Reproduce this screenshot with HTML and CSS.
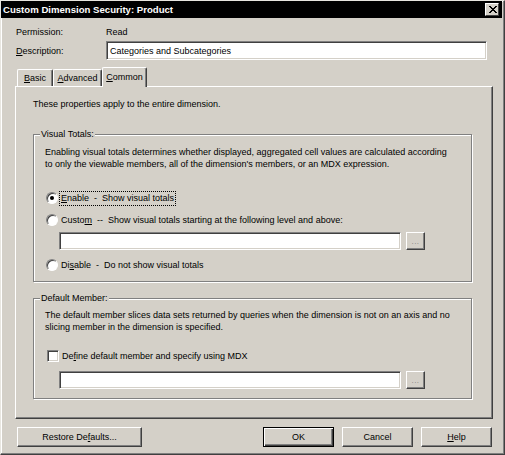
FILE: index.html
```html
<!DOCTYPE html>
<html>
<head>
<meta charset="utf-8">
<link rel="stylesheet" href="styles.css">
</head>
<body>
<div class="window">
  <div class="titlebar">
    <span class="title">Custom Dimension Security: Product</span>
    <span class="close">
      <svg width="9" height="8" viewBox="0 0 9 8"><path d="M1 0 L8 7 M2 0 L9 7 M8 0 L1 7 M9 0 L2 7" stroke="#000" stroke-width="1"/></svg>
    </span>
  </div>
  <div class="main">
    <div class="row perm">
      <span class="label">Permission:</span>
      <span>Read</span>
    </div>
    <div class="row desc">
      <span class="label"><u>D</u>escription:</span>
      <div class="input wide"><span class="val">Categories and Subcategories</span></div>
    </div>
    <div class="tabs">
      <div class="tab t-basic"><u>B</u>asic</div>
      <div class="tab t-adv"><u>A</u>dvanced</div>
      <div class="tab active t-common"><u>C</u>ommon</div>
    </div>
    <div class="panel">
      <p class="intro">These properties apply to the entire dimension.</p>
      <div class="group g1">
        <span class="gtitle">Visual Totals:</span>
        <p class="gtext">Enabling visual totals determines whether displayed, aggregated cell values are calculated according<br>to only the viewable members, all of the dimension's members, or an MDX expression.</p>
        <div class="opt o-enable">
          <span class="radio checked"></span>
          <span class="focus"><u>E</u>nable&nbsp; -&nbsp; Show visual totals</span>
        </div>
        <div class="opt o-custom">
          <span class="radio"></span>
          <span class="olabel">Custo<u>m</u>&nbsp; --&nbsp; Show visual totals starting at the following level and above:</span>
        </div>
        <div class="field">
          <div class="input box"></div>
          <div class="dots">...</div>
        </div>
        <div class="opt o-disable">
          <span class="radio"></span>
          <span class="olabel">Di<u>s</u>able&nbsp; -&nbsp; Do not show visual totals</span>
        </div>
      </div>
      <div class="group g2">
        <span class="gtitle">Default Member:</span>
        <p class="gtext">The default member slices data sets returned by queries when the dimension is not on an axis and no<br>slicing member in the dimension is specified.</p>
        <div class="opt o-check">
          <span class="check"></span>
          <span class="olabel">De<u>f</u>ine default member and specify using MDX</span>
        </div>
        <div class="field f2">
          <div class="input box"></div>
          <div class="dots">...</div>
        </div>
      </div>
    </div>
    <div class="buttons">
      <div class="btn restore">Restore De<u>f</u>aults...</div>
      <div class="spacer"></div>
      <div class="btn default">OK</div>
      <div class="btn">Cancel</div>
      <div class="btn"><u>H</u>elp</div>
    </div>
  </div>
</div>
</body>
</html>
```

FILE: styles.css
```css
html, body {
  margin: 0;
  padding: 0;
}
body {
  width: 505px;
  height: 455px;
  overflow: hidden;
  background: #d4d0c8;
  font-family: "Liberation Sans", Arial, sans-serif;
  font-size: 9px;
  color: #000;
}
u { text-decoration: underline; text-underline-offset: 1px; }
p { margin: 0; }

.window {
  width: 505px;
  height: 455px;
  box-sizing: border-box;
  border-top: 1px solid #e8e6e0;
  border-left: 1px solid #e8e6e0;
  border-right: 1px solid #404040;
  border-bottom: 1px solid #404040;
  box-shadow: inset -1px -1px 0 #808080, inset 1px 1px 0 #fff;
  padding-right: 2px;
}

.titlebar {
  height: 17px;
  background: #000;
  display: flex;
  align-items: center;
  justify-content: space-between;
  padding: 0 3px 0 2px;
}
.title {
  color: #fff;
  font-weight: bold;
  font-size: 9.6px;
}
.close {
  width: 12px;
  height: 11px;
  background: #d4d0c8;
  border-top: 1px solid #fff;
  border-left: 1px solid #fff;
  border-right: 1px solid #404040;
  border-bottom: 1px solid #404040;
  display: flex;
  align-items: center;
  justify-content: center;
}

.main {
  padding-left: 14px;
}

.row {
  display: flex;
  align-items: center;
}
.label {
  width: 90px;
  padding-left: 1px;
}
.perm {
  height: 14px;
  margin-top: 7px;
}
.desc {
  margin-top: 2px;
  height: 19px;
}

.input {
  box-sizing: border-box;
  background: #fff;
  border-top: 1px solid #808080;
  border-left: 1px solid #808080;
  border-right: 1px solid #fff;
  border-bottom: 1px solid #fff;
  box-shadow: inset 1px 1px 0 #404040, inset -1px -1px 0 #d4d0c8;
}
.wide {
  width: 381px;
  height: 19px;
  display: flex;
  align-items: center;
  padding-left: 3px;
}

.tabs {
  margin-top: 7px;
  height: 19px;
  display: flex;
  align-items: flex-end;
  padding-left: 2px;
  position: relative;
  z-index: 1;
}
.tab {
  box-sizing: border-box;
  height: 17px;
  border-top: 1px solid #fff;
  border-left: 1px solid #fff;
  border-right: 1px solid #404040;
  box-shadow: inset -1px 0 0 #808080;
  border-radius: 2px 2px 0 0;
  display: flex;
  align-items: center;
  justify-content: center;
}
.t-basic { width: 36px; }
.t-adv { width: 49px; }
.tab.active {
  width: 45px;
  height: 20px;
  margin-bottom: -1px;
  background: #d4d0c8;
  padding-bottom: 2px;
}

.panel {
  box-sizing: border-box;
  width: 478px;
  height: 333px;
  border-top: 1px solid #fff;
  border-left: 1px solid #fff;
  border-right: 1px solid #404040;
  border-bottom: 1px solid #404040;
  box-shadow: inset -1px -1px 0 #808080;
  padding: 11px 0 0 17px;
}
.intro {
  line-height: 12px;
}

.group {
  position: relative;
  box-sizing: border-box;
  width: 439px;
  border: 1px solid #808080;
  box-shadow: inset 1px 1px 0 #fff, 1px 1px 0 #fff;
  padding-left: 11px;
}
.gtitle {
  position: absolute;
  top: -7px;
  left: 6px;
  background: #d4d0c8;
  padding: 0 1px;
  line-height: 12px;
}
.gtext {
  line-height: 12px;
}
.g1 {
  margin-top: 24px;
  height: 148px;
  padding-top: 11px;
}
.g2 {
  margin-top: 16px;
  height: 101px;
  padding-top: 10px;
}

.opt {
  height: 14px;
  display: flex;
  align-items: center;
}
.o-enable { margin-top: 21px; }
.o-custom { margin-top: 8px; }
.o-disable { margin-top: 8px; }
.o-check { margin-top: 16px; }

.radio {
  box-sizing: border-box;
  width: 12px;
  height: 12px;
  margin-left: 1px;
  margin-right: 2px;
  border-radius: 50%;
  background: #fff;
  border-top: 1px solid #808080;
  border-left: 1px solid #808080;
  border-right: 1px solid #fff;
  border-bottom: 1px solid #fff;
  box-shadow: inset 1px 1px 0 #404040;
  display: flex;
  align-items: center;
  justify-content: center;
}
.radio.checked::after {
  content: "";
  width: 4px;
  height: 4px;
  border-radius: 50%;
  background: #000;
}
.focus {
  outline: 1px dotted #000;
  outline-offset: 0;
  padding: 0 1px 1px 1px;
  line-height: 12px;
}
.olabel {
  padding-left: 1px;
}

.check {
  box-sizing: border-box;
  width: 12px;
  height: 12px;
  margin-left: 2px;
  margin-right: 2px;
  background: #fff;
  border-top: 1px solid #808080;
  border-left: 1px solid #808080;
  border-right: 1px solid #fff;
  border-bottom: 1px solid #fff;
  box-shadow: inset 1px 1px 0 #404040, inset -1px -1px 0 #d4d0c8;
}

.field {
  display: flex;
  margin-top: 5px;
  margin-left: 14px;
  height: 18px;
}
.f2 { margin-top: 8px; }
.box {
  width: 342px;
  height: 18px;
}
.dots {
  box-sizing: border-box;
  width: 19px;
  height: 18px;
  margin-left: 5px;
  border-top: 1px solid #fff;
  border-left: 1px solid #fff;
  border-right: 1px solid #404040;
  border-bottom: 1px solid #404040;
  box-shadow: inset -1px -1px 0 #808080;
  font-size: 8px;
  color: #808080;
  display: flex;
  align-items: center;
  justify-content: center;
  letter-spacing: 0.5px;
}

.buttons {
  display: flex;
  margin-top: 8px;
  padding-left: 2px;
  width: 475px;
  height: 20px;
  gap: 8px;
}
.spacer { flex: 1; }
.btn {
  box-sizing: border-box;
  width: 71px;
  height: 20px;
  border-top: 1px solid #fff;
  border-left: 1px solid #fff;
  border-right: 1px solid #404040;
  border-bottom: 1px solid #404040;
  box-shadow: inset -1px -1px 0 #808080;
  display: flex;
  align-items: center;
  justify-content: center;
}
.restore { width: 125px; }
.btn.default {
  border: 1px solid #000;
  box-shadow: inset 1px 1px 0 #fff, inset -1px -1px 0 #404040, inset -2px -2px 0 #808080;
}
```
